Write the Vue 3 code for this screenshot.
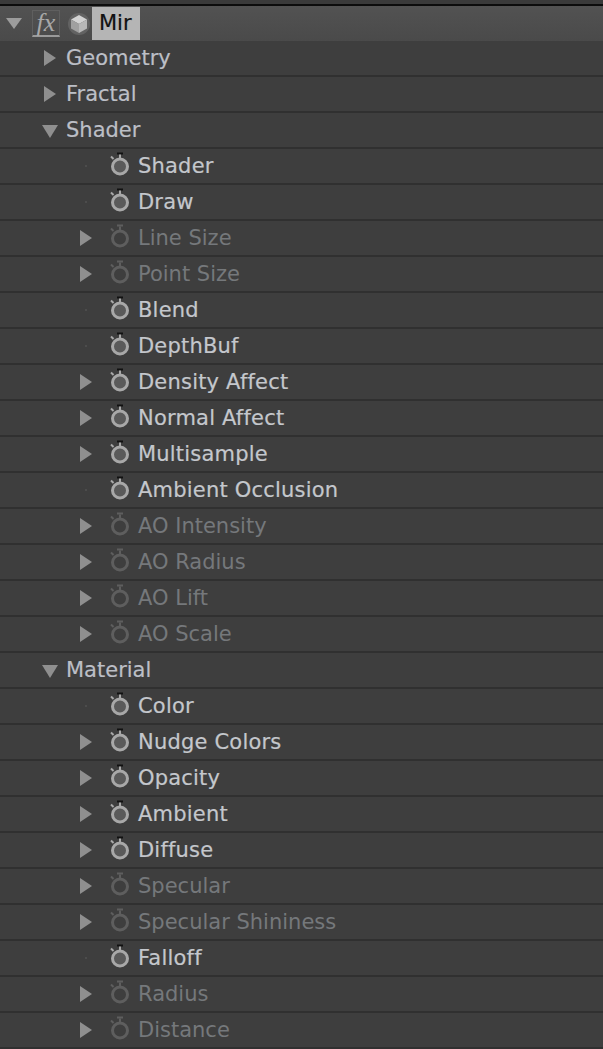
<script setup>
const rows = [
  { label: 'Geometry', level: 1, arrow: 'right' },
  { label: 'Fractal', level: 1, arrow: 'right' },
  { label: 'Shader', level: 1, arrow: 'down' },
  { label: 'Shader', level: 2 },
  { label: 'Draw', level: 2 },
  { label: 'Line Size', level: 2, arrow: 'right', dim: true },
  { label: 'Point Size', level: 2, arrow: 'right', dim: true },
  { label: 'Blend', level: 2 },
  { label: 'DepthBuf', level: 2 },
  { label: 'Density Affect', level: 2, arrow: 'right' },
  { label: 'Normal Affect', level: 2, arrow: 'right' },
  { label: 'Multisample', level: 2, arrow: 'right' },
  { label: 'Ambient Occlusion', level: 2 },
  { label: 'AO Intensity', level: 2, arrow: 'right', dim: true },
  { label: 'AO Radius', level: 2, arrow: 'right', dim: true },
  { label: 'AO Lift', level: 2, arrow: 'right', dim: true },
  { label: 'AO Scale', level: 2, arrow: 'right', dim: true },
  { label: 'Material', level: 1, arrow: 'down' },
  { label: 'Color', level: 2 },
  { label: 'Nudge Colors', level: 2, arrow: 'right' },
  { label: 'Opacity', level: 2, arrow: 'right' },
  { label: 'Ambient', level: 2, arrow: 'right' },
  { label: 'Diffuse', level: 2, arrow: 'right' },
  { label: 'Specular', level: 2, arrow: 'right', dim: true },
  { label: 'Specular Shininess', level: 2, arrow: 'right', dim: true },
  { label: 'Falloff', level: 2 },
  { label: 'Radius', level: 2, arrow: 'right', dim: true },
  { label: 'Distance', level: 2, arrow: 'right', dim: true },
]
</script>

<template>
  <div class="panel">
    <div class="top-edge"></div>
    <div class="row head">
      <svg class="head-tri" width="16" height="11" viewBox="0 0 16 11"><path d="M0 0H16L8 11Z" fill="#9c9c9c" /></svg>
      <div class="fx-box"><span class="fx">fx</span></div>
      <svg class="cube" width="22" height="22" viewBox="0 0 22 22">
        <circle cx="11" cy="11" r="11" fill="#626262" />
        <path d="M11 2L19 6.500L11 11L3 6.500Z" fill="#d2d2d2" />
        <path d="M3 6.500L11 11V20L3 15.500Z" fill="#a0a0a0" />
        <path d="M19 6.500L11 11V20L19 15.500Z" fill="#b8b8b8" />
      </svg>
      <span class="name">Mir</span>
    </div>
    <div v-for="(row, i) in rows" :key="i" class="row" :class="['level' + row.level, { dim: row.dim }]">
      <div class="arrow-slot">
        <svg v-if="row.arrow === 'right'" width="12" height="16" viewBox="0 0 12 16"><path d="M0 0L12 8L0 16Z" class="tri-fill" /></svg>
        <svg v-else-if="row.arrow === 'down'" class="down" width="16" height="13" viewBox="0 0 16 13"><path d="M0 0H16L8 13Z" class="tri-fill" /></svg>
        <span v-else-if="row.level === 2" class="dot"></span>
      </div>
      <svg v-if="row.level === 2" class="watch" width="22" height="28" viewBox="0 0 22 28">
        <circle cx="11" cy="14.500" r="7.500" class="watch-face" />
        <circle cx="11" cy="14.500" r="7.500" class="watch-ring" />
        <path d="M8 1.500H14" class="watch-top" />
        <path d="M11 2.500V6" class="watch-stem" />
        <path d="M2 4.500L4.500 7" class="watch-stem" />
      </svg>
      <span class="label">{{ row.label }}</span>
    </div>
  </div>
</template>

<style>
html, body { background: #3e3e3e; }
</style>

<style scoped>
.panel {
  width: 603px;
  height: 1049px;
  overflow: hidden;
  background: #3e3e3e;
  font-family: "DejaVu Sans", sans-serif;
  font-size: 21px;
}
.top-edge {
  height: 6px;
  background: #3a3a3a;
  border-bottom: 2px solid #0c0c0c;
  box-sizing: border-box;
}
.row {
  height: 36px;
  box-sizing: border-box;
  border-bottom: 2px solid #303030;
  display: flex;
  align-items: center;
  color: #bcbfc6;
  background: #3e3e3e;
  -webkit-text-stroke: 0.2px #bcbfc6;
}
.head {
  height: 35px;
  background: linear-gradient(#525252, #4a4a4a);
  border-bottom: 0;
}
.head-tri { margin-left: 6px; flex: none; }
.fx-box {
  width: 28px;
  height: 27px;
  margin-left: 10px;
  border: 1px solid #5f5f5f;
  border-bottom: 2px solid #9a9a9a;
  box-sizing: border-box;
  display: flex;
  align-items: center;
  justify-content: center;
}
.fx {
  font-family: "Liberation Serif", serif;
  font-style: italic;
  font-size: 26px;
  line-height: 24px;
  color: #a8a8a8;
  -webkit-text-stroke: 0;
}
.cube { margin-left: 8px; flex: none; }
.name {
  background: #b5b5b5;
  color: #111;
  -webkit-text-stroke: 0.2px #111;
  height: 33px;
  line-height: 33px;
  width: 48px;
  margin-left: 2px;
  padding-left: 7px;
  box-sizing: border-box;
}
.arrow-slot {
  display: flex;
  align-items: center;
  justify-content: center;
  flex: none;
}
.level1 .arrow-slot { width: 16px; margin-left: 42px; margin-right: 8px; }
.level2 .arrow-slot { width: 12px; margin-left: 80px; margin-right: 17px; }
.down { margin-top: 3px; }
.dot { width: 2px; height: 2px; background: #4c4c4c; }
.tri-fill { fill: #8f8f8f; }
.watch { flex: none; margin-right: 7px; }
.watch-ring { fill: none; stroke: #a8a8a8; stroke-width: 3; }
.watch-face { fill: #5a5a5a; }
.watch-top { stroke: #111; stroke-width: 2; }
.watch-stem { stroke: #a8a8a8; stroke-width: 2; }
.dim .watch-ring, .dim .watch-stem, .dim .watch-top { stroke: #5e5e5e; }
.dim .watch-face { fill: none; }
.level2 .label { letter-spacing: 0.2px; color: #c4c7cc; -webkit-text-stroke: 0.2px #c4c7cc; }
.dim { -webkit-text-stroke: 0; }
.level2.dim .label { color: #75787b; letter-spacing: 0; -webkit-text-stroke: 0; }
</style>
